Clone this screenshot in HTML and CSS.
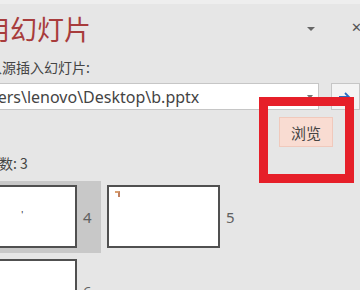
FILE: index.html
```html
<!DOCTYPE html>
<html lang="zh-CN">
<head>
<meta charset="utf-8">
<link rel="stylesheet" href="styles.css">
</head>
<body>
<div class="pane">
  <div class="topstrip"></div>
  <div class="header">
    <div class="title">重用幻灯片</div>
    <div class="hdr-tools">
      <span class="caret"></span>
      <span class="close">✕</span>
    </div>
  </div>
  <div class="label">从源插入幻灯片:</div>
  <div class="input-row">
    <div class="input">
      <span class="path">C:\Users\lenovo\Desktop\b.pptx</span>
      <span class="input-caret"></span>
    </div>
    <div class="go">
      <svg width="14" height="12" viewBox="0 0 14 12"><path d="M1 6h10M7 2l4 4-4 4" fill="none" stroke="#2b6cc4" stroke-width="1.8"/></svg>
    </div>
  </div>
  <div class="browse-row">
    <button class="browse">浏览</button>
  </div>
  <div class="count">幻灯片数: 3</div>
  <div class="grid">
    <div class="item selected">
      <div class="thumb"><span class="mark-a">'</span></div>
      <span class="num">4</span>
    </div>
    <div class="item">
      <div class="thumb"><span class="mark-b"></span></div>
      <span class="num">5</span>
    </div>
    <div class="item">
      <div class="thumb"></div>
      <span class="num">6</span>
    </div>
  </div>
  <div class="highlight"></div>
</div>
</body>
</html>
```
FILE: styles.css
```css
html, body {
  margin: 0;
  padding: 0;
  background: #e6e6e6;
}
.pane {
  position: relative;
  width: 360px;
  height: 290px;
  overflow: hidden;
  background: #e6e6e6;
  font-family: "Noto Sans CJK SC", "Noto Sans", sans-serif;
  color: #444;
}
.topstrip {
  height: 4px;
  background: #eeeeee;
}
.header {
  display: flex;
  align-items: center;
  height: 50px;
}
.title {
  margin-left: -44px;
  font-size: 27px;
  line-height: 30px;
  letter-spacing: 0;
  color: #a83c3c;
  white-space: nowrap;
}
.hdr-tools {
  margin-left: auto;
  display: flex;
  align-items: center;
  margin-right: -5px;
  margin-top: -3px;
}
.caret {
  width: 0;
  height: 0;
  border-left: 4px solid transparent;
  border-right: 4px solid transparent;
  border-top: 4px solid #666;
  margin-right: 36px;
  margin-top: 2px;
}
.close {
  font-family: "DejaVu Sans", sans-serif;
  font-weight: bold;
  font-size: 13px;
  color: #555;
  width: 14px;
}
.label {
  margin-top: 3px;
  margin-left: -12px;
  font-size: 14px;
  line-height: 20px;
  white-space: nowrap;
  color: #444;
}
.input-row {
  display: flex;
  margin-top: 6px;
  height: 27px;
}
.input {
  box-sizing: border-box;
  margin-left: -44px;
  width: 377px;
  height: 27px;
  background: #fff;
  border: 1px solid #c6c6c6;
  display: flex;
  align-items: center;
  padding-left: 1px;
}
.path {
  font-family: "Noto Sans", sans-serif;
  font-size: 16px;
  color: #444;
  white-space: nowrap;
}
.input-caret {
  margin-left: auto;
  margin-right: 5px;
  width: 0;
  height: 0;
  border-left: 3px solid transparent;
  border-right: 3px solid transparent;
  border-top: 4px solid #777;
}
.go {
  box-sizing: border-box;
  margin-left: 12px;
  width: 30px;
  height: 27px;
  background: #f4f4f4;
  border: 1px solid #c6c6c6;
  display: flex;
  align-items: center;
  padding-left: 6px;
}
.browse-row {
  display: flex;
  justify-content: flex-end;
  padding-right: 27px;
  margin-top: 7px;
}
.browse {
  box-sizing: border-box;
  width: 54px;
  height: 30px;
  background: #f9dcd2;
  border: 1px solid #f0c9bc;
  font-family: "Noto Sans CJK SC", sans-serif;
  font-size: 15px;
  color: #444;
  padding: 0;
}
.count {
  margin-top: 6px;
  margin-left: -43px;
  font-size: 14px;
  line-height: 20px;
  white-space: nowrap;
  color: #444;
}
.grid {
  margin-top: 8px;
  margin-left: -40px;
  display: grid;
  grid-template-columns: 141px 141px;
  column-gap: 2px;
  row-gap: 2px;
}
.item {
  display: flex;
  align-items: center;
  padding: 4px 0 5px 4px;
  height: 63px;
}
.item.selected {
  background: #c8c8c8;
}
.thumb {
  position: relative;
  box-sizing: border-box;
  width: 113px;
  height: 63px;
  background: #fff;
  border: 2px solid #505050;
  flex: none;
}
.num {
  margin-left: 6px;
  font-family: "Noto Sans", sans-serif;
  font-size: 15px;
  color: #606060;
}
.mark-a {
  position: absolute;
  left: 55px;
  top: 24px;
  font-size: 9px;
  line-height: 9px;
  color: #333;
}
.mark-b {
  position: absolute;
  left: 6px;
  top: 4px;
  width: 5px;
  height: 6px;
  border-top: 2px solid #d9a070;
  border-right: 2px solid #c08060;
  box-sizing: border-box;
}
.highlight {
  position: absolute;
  left: 259px;
  top: 97px;
  width: 95px;
  height: 86px;
  box-sizing: border-box;
  border: 9px solid #e61f29;
}
```
